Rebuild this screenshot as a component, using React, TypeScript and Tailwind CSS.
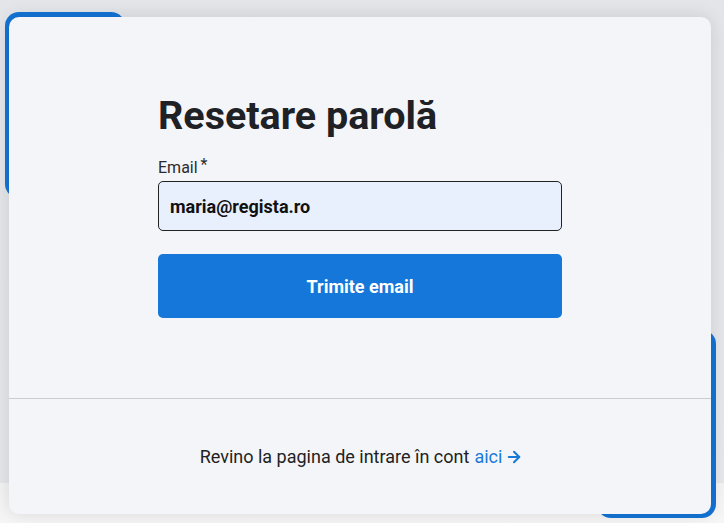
import React from 'react';
import { ArrowRight } from 'lucide-react';

export default function App() {
  return (
    <div
      className="w-full h-[523px] overflow-hidden bg-[linear-gradient(to_bottom,#e4e5e9_0px,#e6e7eb_483px,#f3f3f3_483px,#f6f6f6_100%)] pl-[9px] pr-[13px] pt-[17px] pb-[9px]"
      style={{ fontFamily: 'Roboto, "Noto Sans", sans-serif' }}
    >
      <div className="relative h-full">
        {/* Decorative blue blocks behind the card */}
        <div className="absolute -left-[4px] -top-[5px] w-[120px] h-[186px] rounded-[14px] bg-[#1474d6]" />
        <div className="absolute -right-[5px] -bottom-[4px] w-[119px] h-[188px] rounded-[14px] bg-[#1474d6]" />

        <div className="relative h-full rounded-[10px] bg-[#f4f5f9] shadow-[0_0_18px_rgba(0,0,0,0.12)] flex flex-col">
          <div className="h-[381px] flex justify-center">
            <div className="w-[404px] pt-[75px]">
              <h1 className="text-[39.5px] leading-[48px] font-bold text-[#202124]">
                Resetare parolă
              </h1>

              <label className="mt-[18px] flex items-start text-[16px] leading-[20px] text-[#2b2b2b]">
                Email
                <span className="ml-[3px] text-[16px] leading-[14px]">*</span>
              </label>

              <input
                readOnly
                value="maria@regista.ro"
                className="mt-[3px] w-full h-[50px] rounded-[5px] border border-[#222] bg-[#e8f0fe] px-[11px] text-[18px] font-bold text-[#111] outline-none"
              />

              <button className="mt-[23px] w-full h-[64px] rounded-[5px] bg-[#1477d9] text-white text-[18px] font-bold">
                Trimite email
              </button>
            </div>
          </div>

          <div className="border-t border-[#cbcbd0] flex-1 flex items-center justify-center pl-[3px]">
            <p className="text-[18px] text-[#222] flex items-center">
              Revino la pagina de intrare în cont
              <a href="#" className="ml-[5px] text-[#1a7ad9] flex items-center">
                aici
                <ArrowRight size={18} strokeWidth={2.75} className="ml-[3px] mt-[1px]" />
              </a>
            </p>
          </div>
        </div>
      </div>
    </div>
  );
}
